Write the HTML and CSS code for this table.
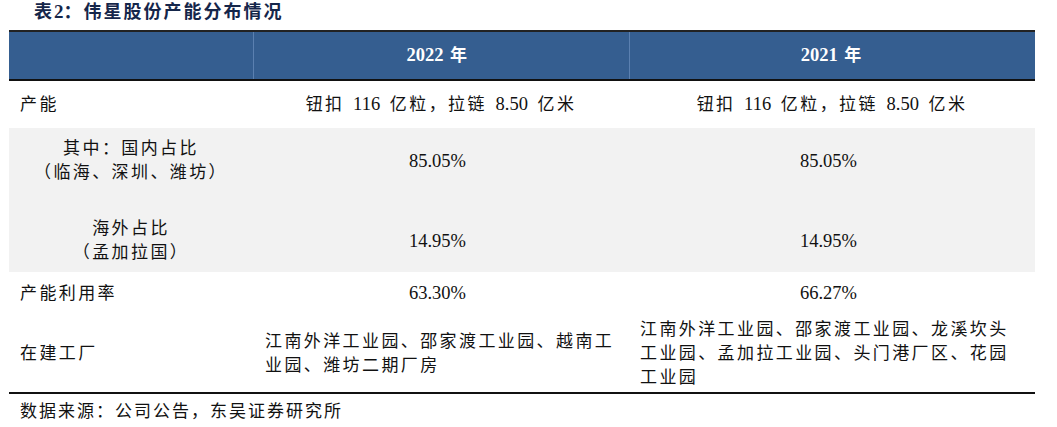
FILE: index.html
```html
<!DOCTYPE html>
<html lang="zh">
<head>
<meta charset="utf-8">
<link rel="stylesheet" href="styles.css">
</head>
<body>
<div class="page">
  <div class="title">表<span class="tnum">2</span>：伟星股份产能分布情况</div>
  <table class="tbl">
    <colgroup>
      <col class="c1"><col class="c2"><col class="c3">
    </colgroup>
    <thead>
      <tr class="head">
        <th></th>
        <th><span class="hnum">2022</span> 年</th>
        <th><span class="hnum">2021</span> 年</th>
      </tr>
    </thead>
    <tbody>
      <tr class="r1">
        <td class="lab">产能</td>
        <td class="ctr">钮扣 <span class="num wide">116</span> 亿粒，拉链 <span class="num wide">8.50</span> 亿米</td>
        <td class="ctr">钮扣 <span class="num wide">116</span> 亿粒，拉链 <span class="num wide">8.50</span> 亿米</td>
      </tr>
      <tr class="gray ra">
        <td class="ctr sub">其中：国内占比<br>（临海、深圳、潍坊）</td>
        <td class="ctr"><span class="num pct">85.05%</span></td>
        <td class="ctr"><span class="num pct">85.05%</span></td>
      </tr>
      <tr class="gray rb">
        <td class="ctr sub">海外占比<br>（孟加拉国）</td>
        <td class="ctr"><span class="num pct">14.95%</span></td>
        <td class="ctr"><span class="num pct">14.95%</span></td>
      </tr>
      <tr class="r3">
        <td class="lab">产能利用率</td>
        <td class="ctr"><span class="num pct">63.30%</span></td>
        <td class="ctr"><span class="num pct">66.27%</span></td>
      </tr>
      <tr class="r4">
        <td class="lab">在建工厂</td>
        <td class="txt2">江南外洋工业园、邵家渡工业园、越南工<br>业园、潍坊二期厂房</td>
        <td class="txt3">江南外洋工业园、邵家渡工业园、龙溪坎头<br>工业园、孟加拉工业园、头门港厂区、花园<br>工业园</td>
      </tr>
    </tbody>
  </table>
  <div class="source">数据来源：公司公告，东吴证券研究所</div>
</div>
</body>
</html>
```

FILE: styles.css
```css
html, body {
  margin: 0;
  padding: 0;
  background: #ffffff;
}

body {
  font-family: "Liberation Serif", "Noto Sans CJK SC", serif;
  color: #111111;
}

.page {
  width: 1057px;
  padding: 0 0 0 9px;
  box-sizing: border-box;
}

.title {
  height: 30px;
  line-height: 24px;
  padding-left: 25px;
  font-size: 18px;
  font-weight: bold;
  letter-spacing: 2px;
  color: #15264a;
}

.tnum {
  font-family: "Liberation Serif", serif;
  font-size: 19px;
  letter-spacing: 0;
}

.tbl {
  width: 1026px;
  border-collapse: collapse;
  table-layout: fixed;
  font-size: 17px;
  letter-spacing: 2.4px;
}

.c1 { width: 244px; }
.c2 { width: 376px; }
.c3 { width: 406px; }

.tbl td, .tbl th {
  padding: 0;
  line-height: 24px;
  vertical-align: middle;
}

.head th {
  height: 47px;
  background: #355e90;
  color: #ffffff;
  font-weight: bold;
  text-align: center;
  border-top: 2px solid #222222;
  border-bottom: 2px solid #111111;
  border-left: 1px solid #5b80b0;
}

.head th:first-child {
  border-left: none;
}

.hnum {
  font-size: 18.5px;
  letter-spacing: 0;
}

.head th:nth-child(2) { padding-right: 6px; }

.num {
  font-size: 18.5px;
  letter-spacing: 0;
}

.wide {
  margin: 0 3px 0 2px;
}

.pct {
  margin-right: 7px;
}

.lab {
  padding-left: 11px !important;
  text-align: left;
}

.ctr {
  text-align: center;
}

.r1 td { height: 47px; }

.gray td { background: #f2f2f2; }

.ra td {
  height: 66px;
  padding-bottom: 6px !important;
}

.rb td {
  height: 62px;
  padding-top: 10px !important;
}

.r3 td { height: 43px; }

.r4 td {
  height: 77px;
  border-bottom: 2px solid #111111;
}

.txt2 {
  padding-left: 12px !important;
  text-align: left;
}

.txt3 {
  padding-left: 11px !important;
  text-align: left;
}

.source {
  padding-left: 11px;
  margin-top: 6px;
  font-size: 17px;
  line-height: 24px;
  letter-spacing: 2px;
}
```
